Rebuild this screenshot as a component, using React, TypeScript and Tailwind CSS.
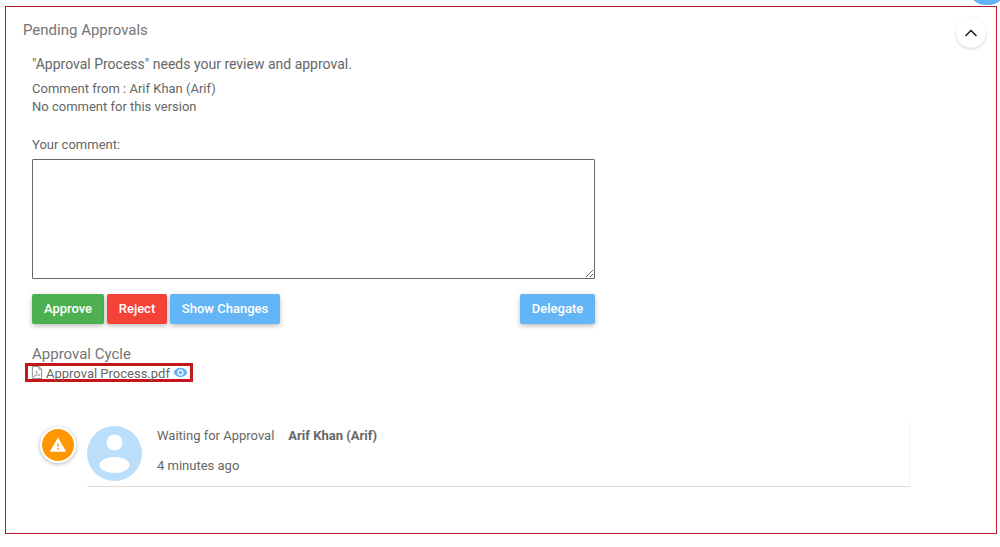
import { ChevronUp } from 'lucide-react';

const font = { fontFamily: 'Roboto, sans-serif' };

function ActionButton({ label, color, width }: { label: string; color: string; width: string }) {
  return (
    <button
      className={`${color} ${width} h-[30px] rounded-[2px] text-[13px] font-medium text-white shadow-[0_2px_5px_rgba(0,0,0,0.26)]`}
    >
      {label}
    </button>
  );
}

export default function App() {
  return (
    <div
      style={font}
      className="relative h-[547px] w-[1000px] overflow-hidden bg-white pl-[5px] pt-[6px] text-[#666]"
    >
      <div className="absolute right-[-6px] top-[-30px] h-[35px] w-[38px] rounded-full bg-[#64b5f6]" />

      <div className="relative h-[528px] w-[992px] border border-[#b71c2c] pl-[26px] pt-[14px]">
        <button className="absolute right-[10px] top-[11px] flex h-[30px] w-[30px] items-center justify-center rounded-full bg-white shadow-[0_1px_3px_rgba(0,0,0,0.18)]">
          <ChevronUp className="h-[20px] w-[20px] text-[#222]" strokeWidth={2} />
        </button>

        <h2 className="-ml-[9px] text-[15px] leading-[19px] text-[#757575]">Pending Approvals</h2>

        <p className="mt-[15px] text-[14px] leading-[18px]">
          "Approval Process" needs your review and approval.
        </p>
        <p className="mt-[7px] text-[13px] leading-[18px]">Comment from : Arif Khan (Arif)</p>
        <p className="text-[13px] leading-[18px]">No comment for this version</p>

        <label className="mt-[20px] block text-[13px] leading-[18px]">Your comment:</label>
        <textarea className="mt-[5px] block h-[120px] w-[563px] rounded-[1px] border border-[#666] bg-white" />

        <div className="mt-[15px] flex w-[563px] gap-[3px]">
          <ActionButton label="Approve" color="bg-[#4caf50]" width="w-[72px]" />
          <ActionButton label="Reject" color="bg-[#f44336]" width="w-[60px]" />
          <ActionButton label="Show Changes" color="bg-[#64b5f6]" width="w-[110px]" />
          <div className="flex-1" />
          <ActionButton label="Delegate" color="bg-[#64b5f6]" width="w-[75px]" />
        </div>

        <h3 className="mt-[22px] text-[15px] leading-[17px] text-[#757575]">Approval Cycle</h3>

        <div className="-ml-[7px] flex h-[19px] w-[168px] items-center whitespace-nowrap border-[3px] border-[#c4161c] pl-[3px] text-[13px]">
          <svg viewBox="0 0 13 14" className="h-[13px] w-[12px] shrink-0 fill-none stroke-[#888]" strokeWidth="1">
            <path d="M1.5.5h7l3 3v10h-10z" />
            <path d="M8.5.5v3h3" />
            <path d="M3 11.5c2-1 3-4 2.8-6.5.6 3 2 4.5 4.2 5-2.5-.2-5 .2-7 1.5z" strokeWidth="0.7" />
          </svg>
          <span className="ml-[3px] pt-[2px] leading-none">Approval Process.pdf</span>
          <svg viewBox="0 0 24 24" className="ml-[3px] h-[15px] w-[15px] shrink-0 fill-[#64b5f6]">
            <path d="M12 4.5C7 4.5 2.73 7.61 1 12c1.73 4.39 6 7.5 11 7.5s9.27-3.11 11-7.5c-1.73-4.39-6-7.5-11-7.5zM12 17c-2.76 0-5-2.24-5-5s2.24-5 5-5 5 2.24 5 5-2.24 5-5 5zm0-8c-1.66 0-3 1.34-3 3s1.34 3 3 3 3-1.34 3-3-1.34-3-3-3z" />
          </svg>
        </div>

        <div className="mt-[40px] flex items-start">
          <div className="ml-[8px] mt-[5px] flex h-[36px] w-[36px] shrink-0 items-center justify-center rounded-full border-[2px] border-white bg-[#ff9800] shadow-[0_1px_4px_rgba(0,0,0,0.3)]">
            <svg viewBox="0 0 24 24" className="h-[18px] w-[18px] fill-white">
              <path d="M1 21h22L12 2 1 21zm12-3h-2v-2h2v2zm0-4h-2v-4h2v4z" />
            </svg>
          </div>
          <div className="ml-[11px] flex h-[65px] w-[823px] items-start border-b border-r border-b-[#ddd] border-r-[#f5f5f5] pt-[4px]">
            <svg viewBox="0 0 55 55" className="h-[55px] w-[55px] shrink-0">
              <circle cx="27.5" cy="27.5" r="27.5" fill="#bbdefb" />
              <circle cx="27.5" cy="16.5" r="8" fill="#fff" />
              <ellipse cx="27.5" cy="39" rx="15" ry="8" fill="#fff" />
            </svg>
            <div className="ml-[15px] text-[13px]">
              <div className="flex h-[20px] items-center">
                <span>Waiting for Approval</span>
                <span className="ml-[14px] font-bold">Arif Khan (Arif)</span>
              </div>
              <div className="mt-[10px] h-[20px] leading-[20px]">4 minutes ago</div>
            </div>
          </div>
        </div>
      </div>
    </div>
  );
}
